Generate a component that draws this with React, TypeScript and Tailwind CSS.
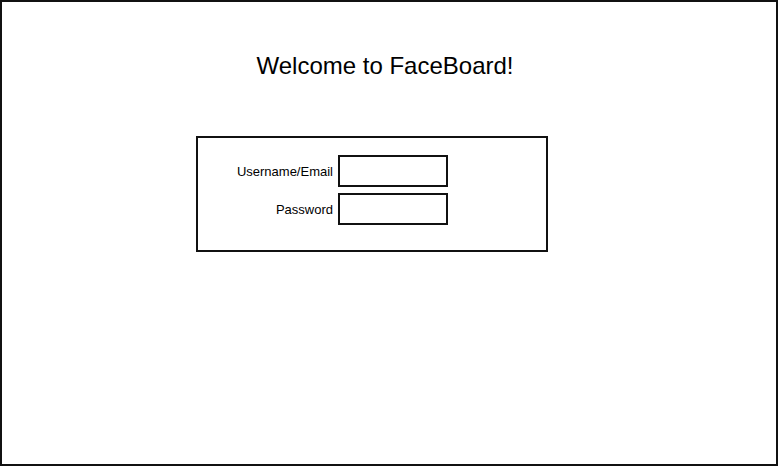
import React from 'react';

const Field: React.FC<{ label: string }> = ({ label }) => (
  <div className="flex items-center">
    <span className="w-[140px] pr-[5px] text-right text-[13px] leading-none text-black">{label}</span>
    <div className="h-[32px] w-[110px] border-2 border-[#111] bg-white" />
  </div>
);

export default function App() {
  return (
    <div
      className="flex h-[466px] w-[778px] flex-col border-2 border-[#111] bg-white text-black"
      style={{ fontFamily: '"Liberation Sans", Arial, sans-serif' }}
    >
      <h1 className="mt-[49px] pr-[8px] text-center text-[24px] leading-[30px]">Welcome to FaceBoard!</h1>
      <div className="ml-[194px] mt-[55px] flex h-[116px] w-[352px] flex-col gap-[6px] border-2 border-[#111] pt-[17px]">
        <Field label="Username/Email" />
        <Field label="Password" />
      </div>
    </div>
  );
}
